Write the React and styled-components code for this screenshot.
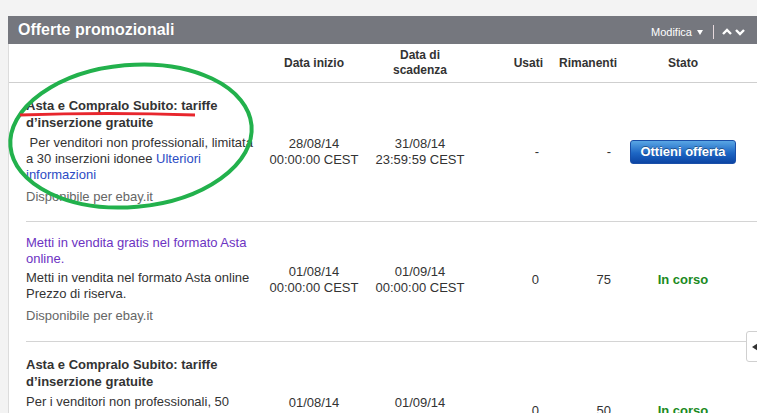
import React from 'react'
import styled, { createGlobalStyle } from 'styled-components'

const GlobalStyle = createGlobalStyle`
    html, body {
        margin: 0;
        padding: 0;
        background: #f3f3f3;
        font-family: "Liberation Sans", Arial, sans-serif;
        overflow: hidden;
    }
`

const offers = [
    {
        title: 'Asta e Compralo Subito: tariffe d’inserzione gratuite',
        text: '\u00a0Per venditori non professionali, limitata a 30 inserzioni idonee ',
        more: 'Ulteriori informazioni',
        site: 'Disponibile per ebay.it',
        start: ['28/08/14', '00:00:00 CEST'],
        end: ['31/08/14', '23:59:59 CEST'],
        used: '-',
        left: '-',
        action: true,
    },
    {
        link: 'Metti in vendita gratis nel formato Asta online.',
        text: 'Metti in vendita nel formato Asta online Prezzo di riserva.',
        site: 'Disponibile per ebay.it',
        start: ['01/08/14', '00:00:00 CEST'],
        end: ['01/09/14', '00:00:00 CEST'],
        used: '0',
        left: '75',
    },
    {
        title: 'Asta e Compralo Subito: tariffe d’inserzione gratuite',
        text: 'Per i venditori non professionali, 50 inserzioni idonee al mese tramite app mobile.',
        site: 'Disponibile per ebay.it',
        start: ['01/08/14', '00:00:00 CEST'],
        end: ['01/09/14', '00:00:00 CEST'],
        used: '0',
        left: '50',
    },
]

function App() {
    return (
        <Page>
            <GlobalStyle />
            <Panel>
                <TitleBar>
                    <h2>Offerte promozionali</h2>
                    <Tools>
                        <span>Modifica</span>
                        <svg width="6" height="5" viewBox="0 0 6 5"><path d="M0 0h6L3 5z" fill="#fff" /></svg>
                        <Divider />
                        <svg width="10" height="8" viewBox="0 0 10 8"><path d="M1 6L5 2l4 4" stroke="#fff" strokeWidth="2.4" fill="none" /></svg>
                        <svg width="10" height="8" viewBox="0 0 10 8"><path d="M1 2l4 4 4-4" stroke="#fff" strokeWidth="2.4" fill="none" /></svg>
                    </Tools>
                </TitleBar>
                <Body>
                    <HeadRow>
                        <span />
                        <HeadCell>Data inizio</HeadCell>
                        <HeadCell>Data di<br />scadenza</HeadCell>
                        <HeadCell $align="right" $pad={7}>Usati</HeadCell>
                        <HeadCell $align="right" $pad={8}>Rimanenti</HeadCell>
                        <HeadCell>Stato</HeadCell>
                    </HeadRow>
                    {offers.map((o, i) => (
                        <Row key={i}>
                            <Desc>
                                {o.title && <h3>{o.title}</h3>}
                                {o.link && <PurpleLink>{o.link}</PurpleLink>}
                                <p>{o.text}{o.more && <a>{o.more}</a>}</p>
                                <Site>{o.site}</Site>
                            </Desc>
                            <Cell>{o.start[0]}<br />{o.start[1]}</Cell>
                            <Cell>{o.end[0]}<br />{o.end[1]}</Cell>
                            <Cell $align="right" $pad={11}>{o.used}</Cell>
                            <Cell $align="right" $pad={14}>{o.left}</Cell>
                            <Cell>
                                {o.action ? <OfferButton>Ottieni offerta</OfferButton> : <Status>In corso</Status>}
                            </Cell>
                        </Row>
                    ))}
                </Body>
            </Panel>
            <Marks width="757" height="413" viewBox="0 0 757 413">
                <ellipse cx="131" cy="136" rx="121" ry="71" transform="rotate(-5 131 136)" fill="none" stroke="#22b14c" strokeWidth="4" />
                <path d="M20 115 Q108 112 195 115" fill="none" stroke="#e8262d" strokeWidth="3" />
            </Marks>
            <FeedbackTab>
                <svg width="6" height="8" viewBox="0 0 6 8"><path d="M6 0v8L0 4z" fill="#333" /></svg>
            </FeedbackTab>
        </Page>
    )
}

export default App

const Page = styled.div`
    position: relative;
    width: 757px;
    height: 413px;
    overflow: hidden;
    padding: 16px 0 0 8px;
    box-sizing: border-box;
`

const Panel = styled.div`
    width: 760px;
    background: #fff;
`

const TitleBar = styled.div`
    display: flex;
    align-items: center;
    justify-content: space-between;
    height: 28px;
    background: #75777e;
    padding: 0 12px 0 10px;
    width: 749px;
    box-sizing: border-box;

    h2 {
        margin: 0;
        color: #fff;
        font-size: 16px;
        font-weight: bold;
        text-shadow: 0 0 1px rgba(0, 0, 0, 0.2);
    }
`

const Tools = styled.div`
    display: flex;
    align-items: center;
    margin-top: 4px;

    span {
        color: #fff;
        font-size: 11px;
        margin-right: 5px;
    }

    svg:last-child {
        margin-left: 3px;
    }
`

const Divider = styled.i`
    display: block;
    width: 1px;
    height: 14px;
    background: #e6d9dc;
    margin: 0 8px 0 10px;
`

const Body = styled.div`
    border-left: 1px solid #dcdcdc;
`

const cols = '234px 108px 104px 78px 75px 116px'

const HeadRow = styled.div`
    display: grid;
    grid-template-columns: ${cols};
    align-items: center;
    height: 38px;
    padding-left: 17px;
    border-bottom: 1px solid #cfcfcf;
`

const HeadCell = styled.div`
    font-size: 12px;
    font-weight: bold;
    line-height: 15px;
    color: #333;
    text-align: ${p => p.$align || 'center'};
    padding-right: ${p => p.$pad || 0}px;
`

const Row = styled.div`
    display: grid;
    grid-template-columns: ${cols};
    align-items: center;
    margin: 0 3px 0 17px;
    padding: 15px 0 16px;
    border-bottom: 1px solid #d4d4d4;

    &:nth-of-type(3) {
        padding: 13px 0 17px;
    }
`

const Desc = styled.div`
    font-size: 13px;
    line-height: 16px;
    color: #333;

    h3 {
        margin: 0 0 4px;
        font-size: 13px;
        line-height: 16.5px;
        font-weight: bold;
        color: #333;
    }

    p {
        margin: 0 0 6px;
    }

    a {
        color: #2c4cc4;
    }
`

const PurpleLink = styled.div`
    color: #6c33c2;
    margin-bottom: 3px;
`

const Site = styled.div`
    color: #666;
`

const Cell = styled.div`
    font-size: 13px;
    line-height: 16px;
    color: #333;
    text-align: ${p => p.$align || 'center'};
    padding-right: ${p => p.$pad || 0}px;
`

const OfferButton = styled.button`
    height: 24px;
    width: 106px;
    padding: 0;
    border: 1px solid #1a4fa8;
    border-radius: 3px;
    background: linear-gradient(#59a6e4, #1d66c4 55%, #0c45a4);
    color: #fff;
    font-family: "Liberation Sans", Arial, sans-serif;
    font-size: 13px;
    font-weight: bold;
    text-shadow: 0 -1px 0 rgba(0, 0, 0, 0.35);
`

const Status = styled.span`
    color: #1a8a22;
    font-size: 13px;
    font-weight: bold;
`

const Marks = styled.svg`
    position: absolute;
    left: 0;
    top: 0;
    pointer-events: none;
`

const FeedbackTab = styled.div`
    position: absolute;
    left: 746px;
    top: 331px;
    width: 20px;
    height: 31px;
    display: flex;
    align-items: center;
    padding-left: 5px;
    box-sizing: border-box;
    background: #fff;
    border: 1px solid #d0d0d0;
    border-radius: 3px;
`
